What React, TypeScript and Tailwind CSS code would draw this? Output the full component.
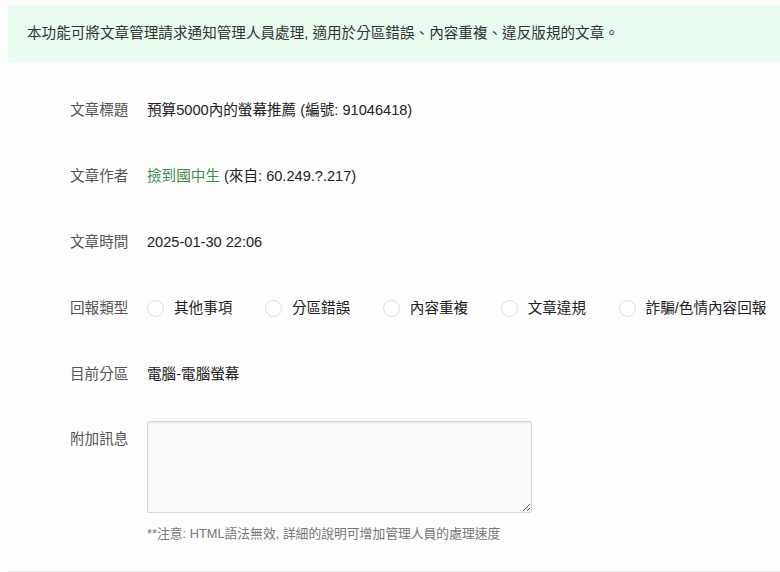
const font = {
  fontFamily: '"Liberation Sans", Arial, "Noto Sans CJK TC", sans-serif',
};

const reportTypes = ["其他事項", "分區錯誤", "內容重複", "文章違規", "詐騙/色情內容回報"];

function Row({ label, children }: { label: string; children: React.ReactNode }) {
  return (
    <div className="flex items-center h-[66px]">
      <div className="w-[77px] shrink-0 text-[14.6px] text-[#555]">{label}</div>
      <div className="flex items-center text-[14.6px] text-[#222]">{children}</div>
    </div>
  );
}

export default function App() {
  return (
    <div className="w-[780px] h-[572px] bg-[#fdfdfd] overflow-hidden" style={font}>
      {/* Notice banner */}
      <div className="pt-[5px] pl-[8px]">
        <div className="h-[57px] bg-[#e9fbef] flex items-center pl-[19px] pt-[1px] text-[14.6px] text-[#333] whitespace-nowrap">
          本功能可將文章管理請求通知管理人員處理, 適用於分區錯誤、內容重複、違反版規的文章。
        </div>
      </div>

      <div className="pl-[70px] pt-[16px]">
        <Row label="文章標題">預算5000內的螢幕推薦 (編號: 91046418)</Row>
        <Row label="文章作者">
          <span className="text-[#3d8c48]">撿到國中生</span>
          <span className="ml-[4px]">(來自: 60.249.?.217)</span>
        </Row>
        <Row label="文章時間">2025-01-30 22:06</Row>
        <Row label="回報類型">
          <div className="flex items-center gap-[32.5px] whitespace-nowrap">
            {reportTypes.map((t) => (
              <label key={t} className="flex items-center gap-[10px]">
                <span className="w-[17px] h-[17px] rounded-full border border-[#dcdcdc] bg-white" />
                <span>{t}</span>
              </label>
            ))}
          </div>
        </Row>
        <Row label="目前分區">電腦-電腦螢幕</Row>

        <div className="flex pt-[13px]">
          <div className="w-[77px] shrink-0 mt-[8px] text-[14.6px] text-[#555] leading-[20px]">附加訊息</div>
          <div>
            <textarea className="block w-[385px] h-[92px] bg-[#fafafa] border border-[#d6d6d6] rounded-[2px] shadow-[inset_0_1px_2px_rgba(0,0,0,0.08)] outline-none" />
            <div className="mt-[12px] text-[12.8px] text-[#777] leading-[18px] whitespace-nowrap">
              **注意: HTML語法無效, 詳細的說明可增加管理人員的處理速度
            </div>
          </div>
        </div>
      </div>

      <div className="ml-[8px] mt-[28px] border-t border-[#e6e6e6]" />
    </div>
  );
}
